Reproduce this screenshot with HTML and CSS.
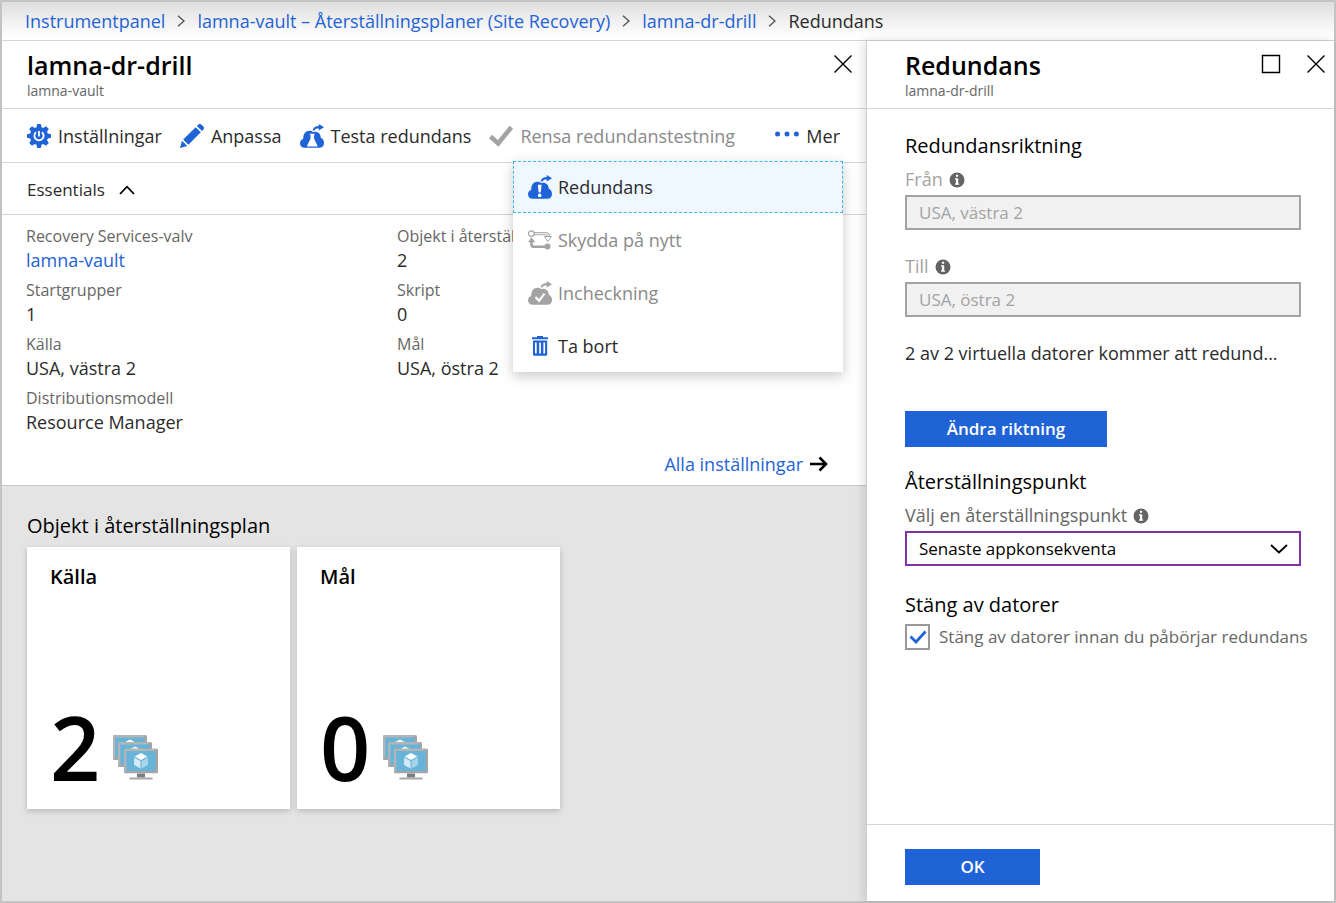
FILE: index.html
```html
<!DOCTYPE html>
<html lang="sv">
<head>
<meta charset="utf-8">
<meta name="viewport" content="width=device-width, initial-scale=1">
<title>lamna-dr-drill – Redundans</title>
<link rel="stylesheet" href="styles.css">
</head>
<body>
<svg class="sprite" aria-hidden="true">
  <symbol id="cloud" viewBox="0 0 24 24">
    <path fill="currentColor" d="M4.800 23.800C1.800 23.800 0 21.900 0 19.300c0-2.200 1.300-3.900 3.200-4.400C3 10.300 5.600 6.800 9.500 6.800c1.500 0 2.700.5 3.500 1.400 4-1.300 7.700 1 7.800 5.600 2 .9 3.200 2.900 3.200 5.200 0 2.900-1.900 4.800-4.600 4.800z"/>
    <path fill="currentColor" d="M12.600 6.200c.9-2.800 3-4.200 6.200-4.200V0L24 3.300l-5.200 3.200V4.600c-2.300-.1-3.600.5-4.800 2.200z"/>
  </symbol>
  <symbol id="close" viewBox="0 0 20 20">
    <path fill="none" stroke="currentColor" stroke-width="1.400" d="M1.500 1.500l17 17M18.500 1.500l-17 17"/>
  </symbol>
  <symbol id="crumb" viewBox="0 0 8 12">
    <path fill="none" stroke="currentColor" stroke-width="1.400" d="M1 .8L7 6l-6 5.200"/>
  </symbol>
  <symbol id="info" viewBox="0 0 16 16">
    <circle cx="8" cy="8" r="7.500" fill="#636363"/>
    <path fill="#fff" d="M6.900 2.700h2.300v2.100H6.900zM6 6.200h3.200v5.300h.9v1.300H6v-1.300h.9V7.500H6z"/>
  </symbol>
  <symbol id="monitor" viewBox="0 0 32 25" preserveAspectRatio="none">
    <rect x="0" y="0" width="32" height="25" rx="1.500" fill="#a3a5a6"/>
    <path d="M0 24L31 0H1.500Q0 0 0 1.500z" fill="#b3b4b5"/>
    <rect x="2.200" y="2.500" width="27.600" height="20" fill="#68b4d9"/>
    <path d="M16 4.500l6 3.500-6 3.500L10 8z" fill="#fff"/>
    <path d="M9.500 9l6 3.500V20l-6-3.500z" fill="#d3e9f4"/>
    <path d="M22.500 9l-6 3.500V20l6-3.500z" fill="#a9d4e9"/>
    <circle cx="16" cy="1.200" r=".8" fill="#b9c45c"/>
  </symbol>
  <symbol id="machines" viewBox="0 0 46 46">
    <use href="#monitor" x="0" y="0" width="34" height="25"/>
    <use href="#monitor" x="5" y="7" width="34" height="25"/>
    <use href="#monitor" x="11" y="13.500" width="34" height="25"/>
    <path d="M24 38.500h8v4h-8z" fill="#7b7d7f"/>
    <path d="M16.500 42.500h23v2h-23z" fill="#a5a7a8"/>
  </symbol>
</svg>

<div class="portal">
  <nav class="breadcrumb" aria-label="Sökväg">
    <a href="#">Instrumentpanel</a>
    <svg class="crumb-sep"><use href="#crumb"/></svg>
    <a href="#">lamna-vault – Återställningsplaner (Site Recovery)</a>
    <svg class="crumb-sep"><use href="#crumb"/></svg>
    <a href="#">lamna-dr-drill</a>
    <svg class="crumb-sep"><use href="#crumb"/></svg>
    <span>Redundans</span>
  </nav>

  <main class="blades">
    <section class="blade plan">
      <header class="blade-head">
        <div>
          <h1>lamna-dr-drill</h1>
          <p>lamna-vault</p>
        </div>
        <div class="window-buttons">
          <button type="button" aria-label="Stäng"><svg><use href="#close"/></svg></button>
        </div>
      </header>

      <div class="toolbar">
        <button type="button">
          <svg class="icon" viewBox="0 0 24 24"><path fill="currentColor" d="M10.200 0h3.600l.7 3.200 1.800.8L19 2.200 21.800 5 20 7.700l.8 1.800 3.200.7v3.600l-3.200.7-.8 1.800 1.800 2.700L19 21.800 16.300 20l-1.800.8-.7 3.200h-3.600l-.7-3.200-1.800-.8L5 21.800 2.200 19 4 16.300l-.8-1.800L0 13.800v-3.600l3.200-.7L4 7.700 2.200 5 5 2.200 7.700 4l1.800-.8z"/><path fill="none" stroke="#fff" stroke-width="1.800" d="M9 8.200a4.600 4.600 0 1 0 6 0"/><path stroke="#fff" stroke-width="1.800" d="M12 7v5.500"/></svg>
          Inställningar
        </button>
        <button type="button">
          <svg class="icon" viewBox="0 0 24 24"><path fill="currentColor" d="M0 24l2-7.200L7.200 22zM3.200 15.600L15.700 3.200l5.100 5.100L8.400 20.800zM16.900 2l1.300-1.300c1-1 2.300-1 3.300 0l1.800 1.800c1 1 1 2.300 0 3.300L22 7.100z"/></svg>
          Anpassa
        </button>
        <button type="button">
          <svg class="icon" viewBox="0 0 24 24"><use href="#cloud"/><path fill="#fff" d="M9.800 9.800h5v1h-.7v4l3.300 6.600c.3.700 0 1.200-.8 1.200H8c-.8 0-1.100-.5-.8-1.200l3.300-6.600v-4h-.7z"/></svg>
          Testa redundans
        </button>
        <button type="button" disabled>
          <svg class="icon" viewBox="0 0 24 24"><path fill="none" stroke="#a3a3a3" stroke-width="4.600" d="M1.500 12.500l7.700 7L22.300 3.200"/></svg>
          Rensa redundanstestning
        </button>
        <button type="button" class="more" aria-expanded="true">
          <svg class="icon" viewBox="0 0 24 24"><g fill="currentColor"><circle cx="2.600" cy="10" r="2.500"/><circle cx="12" cy="10" r="2.500"/><circle cx="21.400" cy="10" r="2.500"/></g></svg>
          Mer
        </button>

        <div class="menu" role="menu">
          <button type="button" role="menuitem" class="active">
            <svg class="icon" viewBox="0 0 24 24"><use href="#cloud"/><path fill="#fff" d="M9.800 9.800h3.800l-.9 7.700h-2z"/><circle cx="11.700" cy="20.400" r="1.800" fill="#fff"/></svg>
            Redundans
          </button>
          <button type="button" role="menuitem" disabled>
            <svg class="icon" viewBox="0 0 24 24"><path d="M6 5.600h11.500c2.300 0 3.200 1 3.200 3.400" fill="none" stroke="#b4b4b4" stroke-width="3.400"/><path d="M6 5.600h11.500c2.300 0 3.200 1 3.200 3.800" fill="none" stroke="#e6e6e6" stroke-width="1.200"/><path d="M16.300 8.500h7l-3.500 5z" fill="#fff" stroke="#a3a3a3"/><circle cx="3.300" cy="5.600" r="2.800" fill="#fff" stroke="#a3a3a3" stroke-width="1.200"/><path d="M3.500 13v3.200c0 1.700.9 2.600 2.600 2.600h13" fill="none" stroke="#a3a3a3" stroke-width="2.600"/><path fill="#a3a3a3" d="M3.500 9.300l3.800 5H0z"/><circle cx="19.500" cy="18.600" r="3" fill="#a3a3a3"/></svg>
            Skydda på nytt
          </button>
          <button type="button" role="menuitem" disabled>
            <svg class="icon" viewBox="0 0 24 24"><use href="#cloud"/><path fill="none" stroke="#fff" stroke-width="2.200" d="M7.500 16l3.600 3.700 5.400-7"/></svg>
            Incheckning
          </button>
          <button type="button" role="menuitem">
            <svg class="icon" viewBox="0 0 24 24"><path fill="currentColor" d="M9 2h6v1.200h5V5.200H4V3.200h5z"/><path fill="currentColor" fill-rule="evenodd" d="M5 6.500h14.200v13.700c0 1-.6 1.600-1.600 1.600h-11c-1 0-1.600-.6-1.600-1.600zM7 8.500v11h1.700v-11zM11.200 8.500v11h1.700v-11zM15.400 8.500v11h1.700v-11z"/></svg>
            Ta bort
          </button>
        </div>
      </div>

      <button type="button" class="essentials-toggle" aria-expanded="true">
        Essentials
        <svg viewBox="0 0 16 10"><path fill="none" stroke="currentColor" stroke-width="1.800" d="M1 9l7-7.300L15 9"/></svg>
      </button>

      <div class="essentials">
        <dl>
          <div><dt>Recovery Services-valv</dt><dd><a href="#">lamna-vault</a></dd></div>
          <div><dt>Objekt i återställningsplan</dt><dd>2</dd></div>
          <div><dt>Startgrupper</dt><dd>1</dd></div>
          <div><dt>Skript</dt><dd>0</dd></div>
          <div><dt>Källa</dt><dd>USA, västra 2</dd></div>
          <div><dt>Mål</dt><dd>USA, östra 2</dd></div>
          <div><dt>Distributionsmodell</dt><dd>Resource Manager</dd></div>
        </dl>
        <a class="all-settings" href="#">Alla inställningar
          <svg viewBox="0 0 18 16"><path fill="none" stroke="#000" stroke-width="2.600" d="M0 8h16M9.500 1.500L16 8l-6.500 6.500"/></svg>
        </a>
      </div>

      <div class="items">
        <h2>Objekt i återställningsplan</h2>
        <div class="tiles">
          <article class="tile">
            <h3>Källa</h3>
            <div class="count"><strong>2</strong><svg><use href="#machines"/></svg></div>
          </article>
          <article class="tile">
            <h3>Mål</h3>
            <div class="count"><strong>0</strong><svg><use href="#machines"/></svg></div>
          </article>
        </div>
      </div>
    </section>

    <section class="blade failover">
      <header class="blade-head">
        <div>
          <h1>Redundans</h1>
          <p>lamna-dr-drill</p>
        </div>
        <div class="window-buttons">
          <button type="button" aria-label="Maximera"><svg viewBox="0 0 20 20"><path fill="none" stroke="currentColor" stroke-width="1.400" d="M1.500 1.500h17v17h-17z"/></svg></button>
          <button type="button" aria-label="Stäng"><svg><use href="#close"/></svg></button>
        </div>
      </header>

      <form class="form">
        <h2>Redundansriktning</h2>
        <div class="field muted">
          <label for="from">Från <svg class="info"><use href="#info"/></svg></label>
          <input id="from" type="text" value="USA, västra 2" disabled>
        </div>
        <div class="field muted">
          <label for="to">Till <svg class="info"><use href="#info"/></svg></label>
          <input id="to" type="text" value="USA, östra 2" disabled>
        </div>
        <p class="summary">2 av 2 virtuella datorer kommer att redund...</p>
        <button type="button" class="primary swap">Ändra riktning</button>

        <h2>Återställningspunkt</h2>
        <div class="field">
          <label for="point">Välj en återställningspunkt <svg class="info"><use href="#info"/></svg></label>
          <div class="select">
            <select id="point"><option>Senaste appkonsekventa</option></select>
            <svg viewBox="0 0 18 10"><path fill="none" stroke="currentColor" stroke-width="1.800" d="M1 1l8 7.500L17 1"/></svg>
          </div>
        </div>

        <h2>Stäng av datorer</h2>
        <label class="check">
          <span class="box">
            <input type="checkbox" checked>
            <svg viewBox="0 0 18 14"><path fill="none" stroke="currentColor" stroke-width="2.800" d="M1.500 6.500l5.500 5.500L16.500 1.500"/></svg>
          </span>
          Stäng av datorer innan du påbörjar redundans
        </label>
      </form>

      <footer class="blade-foot">
        <button type="button" class="primary ok">OK</button>
      </footer>
    </section>
  </main>
</div>
</body>
</html>
```
FILE: styles.css
```css
:root {
  --blue: #1f63d6;
  --line: #d5d5d5;
  --text: #2b2b2b;
  --label: #666;
  --muted: #a3a3a3;
}

* { box-sizing: border-box; }

body {
  margin: 0;
  font: 18px/24px "Open Sans", "Noto Sans", sans-serif;
  color: var(--text);
}

h1, h2, h3, p, dl, dd { margin: 0; }

a { color: var(--blue); text-decoration: none; }

button {
  padding: 0;
  border: 0;
  background: none;
  font: inherit;
  color: inherit;
  white-space: nowrap;
}

.sprite { position: absolute; width: 0; height: 0; }

.portal {
  display: flex;
  flex-direction: column;
  min-height: 100vh;
  border: 2px solid #c3c3c3;
  background: #fff;
}

.breadcrumb {
  display: flex;
  align-items: center;
  gap: 12px;
  height: 39px;
  padding: 0 23px;
  border-bottom: 1px solid var(--line);
  background: linear-gradient(#dedede, #fff 90%);
  white-space: nowrap;
}

.crumb-sep { width: 8px; height: 12px; color: #555; }

.blades {
  flex: 1;
  display: grid;
  grid-template-columns: minmax(0, 24fr) minmax(0, 13fr);
}

.blade { display: flex; flex-direction: column; }

.failover {
  z-index: 1;
  border-left: 1px solid #d0d0d0;
  background: #fff;
  box-shadow: -2px 0 10px rgba(0, 0, 0, .14);
}

.blade-head {
  display: flex;
  justify-content: space-between;
  height: 68px;
  padding: 8px 13px 0 25px;
  border-bottom: 1px solid var(--line);
}

.failover .blade-head { padding-left: 38px; padding-right: 8px; }

h1 {
  font-size: 25px;
  line-height: 32px;
  font-weight: 600;
  color: #000;
}

.blade-head p { font-size: 14px; line-height: 20px; color: var(--label); }

.window-buttons {
  display: flex;
  align-items: flex-start;
  gap: 25px;
  padding-top: 5px;
  color: #000;
}

.window-buttons svg { display: block; width: 20px; height: 20px; }

.toolbar {
  position: relative;
  display: flex;
  align-items: center;
  gap: 18px;
  height: 54px;
  padding: 0 26px 0 25px;
  border-bottom: 1px solid var(--line);
}

.toolbar button { display: flex; align-items: center; gap: 7px; }

.icon { flex: none; width: 24px; height: 24px; color: var(--blue); }

button:disabled { color: #8a8a8a; }
button:disabled .icon { color: var(--muted); }

.toolbar .more { margin-left: auto; }

.menu {
  position: absolute;
  z-index: 2;
  top: 52px;
  right: 23px;
  display: flex;
  flex-direction: column;
  gap: 1px;
  width: 330px;
  background: #fff;
  box-shadow: 0 4px 12px rgba(0, 0, 0, .22);
}

.toolbar .menu button {
  gap: 6px;
  height: 52px;
  padding: 0 14px;
  border: 1px dashed transparent;
}

.toolbar .menu .active { border-color: #3db7ea; background: #eff7ff; }

.essentials-toggle {
  display: flex;
  align-items: center;
  gap: 14px;
  height: 52px;
  padding: 2px 25px 0;
  border-bottom: 1px solid var(--line);
  font-size: 17px;
}

.essentials-toggle svg { width: 16px; height: 10px; color: #000; }

.essentials {
  display: flex;
  flex-direction: column;
  padding: 9px 38px 8px 24px;
  border-bottom: 1px solid #c8c8c8;
}

.essentials dl {
  display: grid;
  grid-template-columns: 371px 116px;
  row-gap: 6px;
}

.essentials dt {
  overflow: hidden;
  font-size: 16px;
  color: var(--label);
  white-space: nowrap;
}

.all-settings {
  display: flex;
  align-items: center;
  align-self: flex-end;
  gap: 7px;
  margin-top: 18px;
  padding-bottom: 1px;
}

.all-settings svg { width: 18px; height: 16px; }

.items {
  flex: 1;
  padding: 26px 25px;
  background: #e4e4e4;
}

h2 {
  font-size: 20px;
  line-height: 28px;
  font-weight: 400;
  color: #000;
}

.tiles { display: flex; flex-wrap: wrap; gap: 7px; margin-top: 7px; }

.tile {
  display: flex;
  flex-direction: column;
  justify-content: space-between;
  width: 263px;
  height: 262px;
  padding: 16px 23px 20px;
  background: #fff;
  box-shadow: 0 2px 6px rgba(0, 0, 0, .2);
}

h3 { font-size: 20px; line-height: 28px; font-weight: 600; color: #000; }

.count { display: flex; align-items: flex-end; gap: 13px; }

.count strong {
  font-size: 88px;
  line-height: 84px;
  font-weight: 600;
  color: #000;
}

.count svg { width: 46px; height: 46px; margin-bottom: 8px; }

.form {
  flex: 1;
  display: flex;
  flex-direction: column;
  padding: 23px 0 0 38px;
}

.field { display: flex; flex-direction: column; margin-right: 33px; }
.field + .field { margin-top: 17px; }

.field label {
  display: flex;
  align-items: center;
  gap: 6px;
  padding: 7px 0 3px;
  line-height: 25px;
  color: var(--label);
}

.muted label { color: var(--muted); }

.info { width: 16px; height: 16px; }

.field input, .field select {
  width: 100%;
  height: 35px;
  padding: 0 12px;
  border: 2px solid var(--muted);
  border-radius: 0;
  background: #f1f1f1;
  font: 17px/24px "Open Sans", "Noto Sans", sans-serif;
  color: var(--muted);
}

.select { display: grid; align-items: center; }

.field select {
  grid-area: 1 / 1;
  appearance: none;
  border-color: #7f35a5;
  background: #fff;
  color: #000;
}

.select svg {
  grid-area: 1 / 1;
  justify-self: end;
  width: 18px;
  height: 10px;
  margin-right: 13px;
  color: #000;
  pointer-events: none;
}

.summary { margin-top: 24px; color: var(--text); white-space: nowrap; }

.primary {
  height: 36px;
  background: var(--blue);
  color: #fff;
  font-weight: 600;
  font-size: 17px;
}

.swap { width: 202px; margin: 46px 0 21px; }
.ok { width: 135px; }

.field + h2 { margin-top: 25px; }

.check {
  display: flex;
  align-items: center;
  gap: 9px;
  margin-top: 5px;
  font-size: 17px;
  color: var(--label);
  white-space: nowrap;
}

.box { display: grid; place-items: center; }

.box input {
  grid-area: 1 / 1;
  appearance: none;
  width: 25px;
  height: 26px;
  margin: 0;
  border: 2px solid #999;
}

.box svg {
  grid-area: 1 / 1;
  width: 18px;
  height: 14px;
  color: var(--blue);
  pointer-events: none;
}

.blade-foot {
  padding: 24px 38px 16px;
  border-top: 1px solid var(--line);
}
```
